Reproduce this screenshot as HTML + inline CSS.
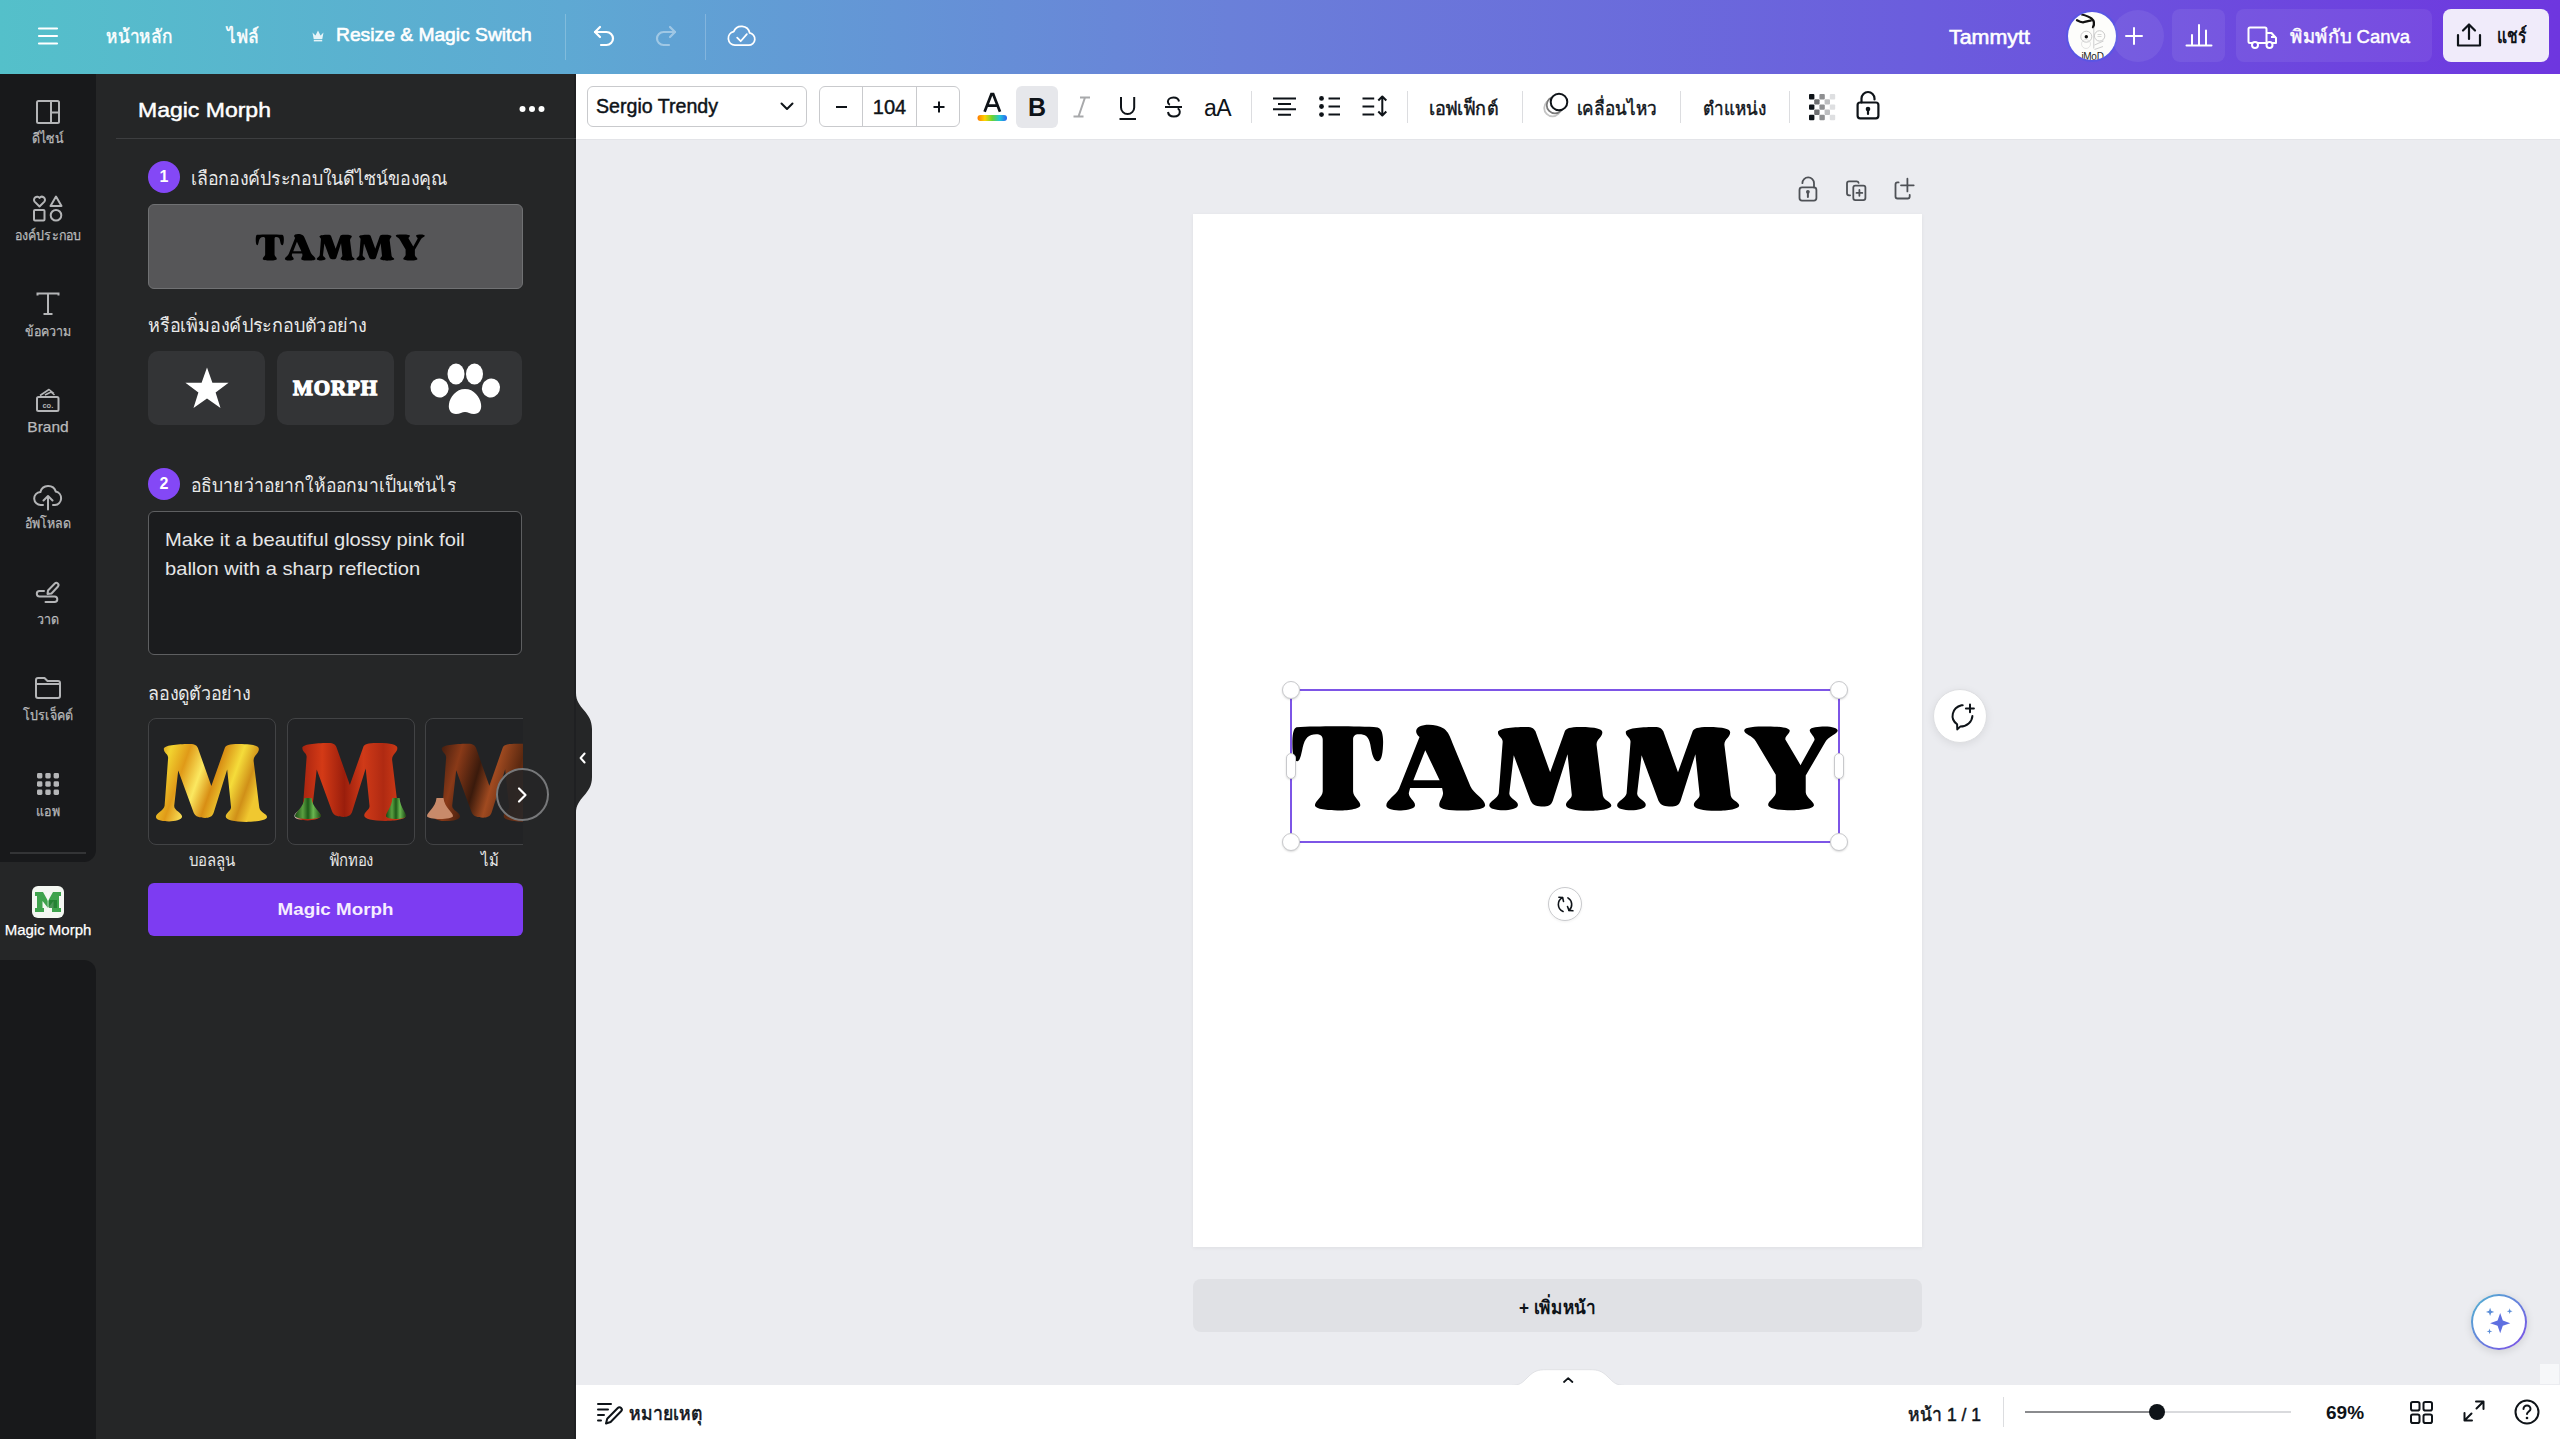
<!DOCTYPE html>
<html><head><meta charset="utf-8">
<style>
*{box-sizing:border-box;margin:0;padding:0}
html,body{width:2560px;height:1439px;overflow:hidden}
body{font-family:"Liberation Sans",sans-serif;background:#ebecf0;position:relative;color:#0d1216}
.a{position:absolute}
svg{display:block;overflow:visible}
#top{left:0;top:0;width:2560px;height:74px;background:linear-gradient(90deg,#54c0ca 0%,#5ea9d3 22%,#6a80d9 48%,#6b5ddd 75%,#6e36df 100%)}
.tw{color:#fff;font-size:19px;white-space:nowrap}
.md{-webkit-text-stroke:.45px currentColor}
.tk{color:#0e1318;white-space:nowrap}
#rail{left:0;top:74px;width:96px;height:1365px;background:#252627}
.railbg{background:#18191b}
.ri{left:0;width:96px;text-align:center;color:#b9babc;font-size:14px;white-space:nowrap;-webkit-text-stroke:.25px currentColor}
.ri.th{transform:scaleX(.89)}
#panel{left:96px;top:74px;width:480px;height:1365px;background:#252627}
#tb{left:576px;top:74px;width:1984px;height:65px;background:#fff;box-shadow:0 1px 0 #e3e4e8}
#bot{left:576px;top:1385px;width:1984px;height:54px;background:#fff}
.pw{color:#eaeaea;font-size:19px;white-space:nowrap}
.badge{width:32px;height:32px;border-radius:50%;background:#8448f6;color:#fff;font-size:16px;font-weight:bold;text-align:center;line-height:32px}
.tile{width:117px;height:74px;border-radius:10px;background:#333436}
.itile{width:128px;height:127px;border-radius:8px;border:1.5px solid #424345;background:#222325}
.lbl{transform:scaleX(.88);text-align:center;color:#e6e6e6;font-size:17px;white-space:nowrap}
.hdl{width:18px;height:18px;border-radius:50%;background:#fff;border:1px solid #c8c9cc;box-shadow:0 1px 2px rgba(0,0,0,.15)}
.shdl{width:10px;height:26px;border-radius:5px;background:#fff;border:1px solid #c8c9cc;box-shadow:0 1px 2px rgba(0,0,0,.15)}
</style></head><body>
<!-- TOP BAR -->
<div id="top" class="a">
  <svg class="a" style="left:36px;top:26px" width="24" height="20" viewBox="0 0 24 20"><path d="M3 2.5h18M3 10h18M3 17.5h18" stroke="#fff" stroke-width="2.2" stroke-linecap="round"/></svg>
  <div class="a tw th md" style="left:106px;top:21px;transform:scaleX(.905);transform-origin:0 0">หน้าหลัก</div>
  <div class="a tw th md" style="left:227px;top:21px;transform:scaleX(.91);transform-origin:0 0">ไฟล์</div>
  <svg class="a" style="left:311px;top:29px" width="14" height="13" viewBox="0 0 14 13"><path d="M1.5 3.5l3 3 2.5-5 2.5 5 3-3-1.2 6.5h-8.6z" fill="#fff" opacity=".85"/><rect x="2.8" y="10.8" width="8.4" height="1.6" fill="#fff" opacity=".85"/></svg>
  <div class="a tw" id="rms" style="left:336px;top:24px;font-size:19.25px;-webkit-text-stroke:.6px #fff">Resize &amp; Magic Switch</div>
  <div class="a" style="left:565px;top:14px;width:1px;height:46px;background:rgba(255,255,255,.22)"></div>
  <svg class="a" style="left:590px;top:26px" width="28" height="26" viewBox="0 0 28 26"><path d="M5 6h11.5a6.5 6.5 0 0 1 0 13H11" fill="none" stroke="#fff" stroke-width="2.2" stroke-linecap="round"/><path d="M10 1L5 6l5 5" fill="none" stroke="#fff" stroke-width="2.2" stroke-linecap="round" stroke-linejoin="round"/></svg>
  <svg class="a" style="left:652px;top:26px" width="28" height="26" viewBox="0 0 28 26" opacity=".4"><path d="M23 6H11.5a6.5 6.5 0 0 0 0 13H17" fill="none" stroke="#fff" stroke-width="2.2" stroke-linecap="round"/><path d="M18 1l5 5-5 5" fill="none" stroke="#fff" stroke-width="2.2" stroke-linecap="round" stroke-linejoin="round"/></svg>
  <div class="a" style="left:705px;top:14px;width:1px;height:46px;background:rgba(255,255,255,.22)"></div>
  <svg class="a" style="left:727px;top:24px" width="30" height="23" viewBox="0 0 34 26"><path d="M9 24h15.5a7 7 0 0 0 1.2-13.9A9.5 9.5 0 0 0 7.6 8.6 7.8 7.8 0 0 0 9 24z" fill="none" stroke="#fff" stroke-width="2" stroke-linejoin="round"/><path d="M11.5 15.5l4 4 7-8" fill="none" stroke="#fff" stroke-width="2" stroke-linecap="round" stroke-linejoin="round"/></svg>

  <div class="a tw" style="left:1949px;top:26px;font-size:20px;-webkit-text-stroke:.6px #fff;transform:scaleX(1.07);transform-origin:0 0">Tammytt</div>
  <!-- avatar -->
  <div class="a" style="left:2068px;top:12px;width:48px;height:48px;border-radius:50%;background:#fdfdfb;overflow:hidden;box-shadow:0 0 0 2px #5a55e4">
    <svg width="48" height="48" viewBox="0 0 48 48"><path d="M14 2.5C18 3.5 21 4.5 23.4 6.4 26 8.5 27 11 25 15.3M9 8.3C11 9.5 13 10.3 15 10.3 18 10 20 8.8 22.6 8.7" fill="none" stroke="#111" stroke-width="2.3" stroke-linecap="round"/><circle cx="18.3" cy="24.7" r="5.5" fill="none" stroke="#c4c4c4" stroke-width=".9"/><circle cx="18.3" cy="24.7" r="1.7" fill="#111"/><circle cx="31.6" cy="23.9" r="5.2" fill="none" stroke="#c4c4c4" stroke-width=".9"/><path d="M29.5 22.5h4M29.5 24.5h4" stroke="#ccc" stroke-width=".8"/><path d="M25.8 15.5v21M26.5 33l9-4M26.5 37.5l8.5-3" fill="none" stroke="#c8c8c8" stroke-width=".9"/><circle cx="18" cy="32" r="4.5" fill="none" stroke="#ddd" stroke-width=".8"/><text x="24.5" y="47.5" font-size="10" text-anchor="middle" font-family="Liberation Sans" fill="#222" letter-spacing="-.3">iMoD</text></svg>
  </div>
  <div class="a" style="left:2112px;top:10px;width:52px;height:52px;border-radius:50%;background:rgba(255,255,255,.07)"></div>
  <svg class="a" style="left:2125px;top:27px" width="18" height="18" viewBox="0 0 18 18"><path d="M9 1v16M1 9h16" stroke="#fff" stroke-width="2" stroke-linecap="round"/></svg>
  <div class="a" style="left:2172px;top:9px;width:53px;height:53px;border-radius:8px;background:rgba(255,255,255,.07)"></div>
  <svg class="a" style="left:2184px;top:22px" width="30" height="26" viewBox="0 0 30 26"><path d="M2.5 23.5h25M8 23V13M15 23V3M22 23V8.5" stroke="#fff" stroke-width="2" stroke-linecap="round"/></svg>
  <div class="a" style="left:2236px;top:9px;width:196px;height:53px;border-radius:8px;background:rgba(255,255,255,.07)"></div>
  <svg class="a" style="left:2247px;top:24px" width="32" height="26" viewBox="0 0 32 26"><path d="M3 3.5h15a1.5 1.5 0 0 1 1.5 1.5v14H3a1.5 1.5 0 0 1-1.5-1.5v-12.5A1.5 1.5 0 0 1 3 3.5zM19.5 9h5l4.5 5v5h-9.5" fill="none" stroke="#fff" stroke-width="2" stroke-linejoin="round"/><path d="M24 13h4.5" stroke="#fff" stroke-width="2"/><circle cx="8" cy="21" r="3" fill="#6a44e0" stroke="#fff" stroke-width="2"/><circle cx="22.5" cy="21" r="3" fill="#6a44e0" stroke="#fff" stroke-width="2"/></svg>
  <div class="a tw th md" style="left:2290px;top:21px;transform:scaleX(.975);transform-origin:0 0">พิมพ์กับ Canva</div>
  <div class="a" style="left:2443px;top:9px;width:106px;height:53px;border-radius:8px;background:#f0ebfa"></div>
  <svg class="a" style="left:2455px;top:22px" width="28" height="27" viewBox="0 0 28 27"><path d="M14 17V3M8 8.5L14 2.5l6 6" fill="none" stroke="#0e1318" stroke-width="2.2" stroke-linecap="round" stroke-linejoin="round"/><path d="M3 13v10.5h22V13" fill="none" stroke="#0e1318" stroke-width="2.2" stroke-linecap="round" stroke-linejoin="round"/></svg>
  <div class="a th" style="left:2497px;top:20px;font-size:20px;color:#0e1318;font-weight:bold;transform:scaleX(.78);transform-origin:0 0">แชร์</div>
</div>
<!-- LEFT RAIL -->
<div id="rail" class="a">
  <div class="a railbg" style="left:0;top:0;width:96px;height:788px;border-bottom-right-radius:12px"></div>
  <div class="a railbg" style="left:0;top:886px;width:96px;height:479px;border-top-right-radius:12px"></div>
  <svg class="a" style="left:36px;top:26px" width="24" height="24" viewBox="0 0 24 24"><rect x="1" y="1" width="22" height="22" rx="1.5" fill="none" stroke="#b4b5b7" stroke-width="2"/><path d="M15 1v22M15 12.5h8" stroke="#b4b5b7" stroke-width="2"/></svg>
  <div class="a ri th" style="top:53px">ดีไซน์</div>
  <svg class="a" style="left:32px;top:120px" width="32" height="28" viewBox="0 0 32 28"><path d="M7.5 12.5L2.6 7.6a3 3 0 0 1 4.9-3.6 3 3 0 0 1 4.9 3.6z" fill="none" stroke="#b4b5b7" stroke-width="2" stroke-linejoin="round"/><path d="M24 2.5l5.5 9.5h-11z" fill="none" stroke="#b4b5b7" stroke-width="2" stroke-linejoin="round"/><rect x="2" y="16" width="10.5" height="10.5" rx="1" fill="none" stroke="#b4b5b7" stroke-width="2"/><circle cx="24" cy="21.3" r="5.3" fill="none" stroke="#b4b5b7" stroke-width="2"/></svg>
  <div class="a ri th" style="top:150px">องค์ประกอบ</div>
  <svg class="a" style="left:36px;top:218px" width="24" height="24" viewBox="0 0 24 24"><path d="M1.5 3.5V1.5h21v2M12 1.5v20.5M7.5 22h9" fill="none" stroke="#b4b5b7" stroke-width="2"/></svg>
  <div class="a ri th" style="top:246px">ข้อความ</div>
  <svg class="a" style="left:35px;top:312px" width="26" height="28" viewBox="0 0 26 28"><rect x="2" y="11" width="21.5" height="14" rx="1.5" fill="none" stroke="#b4b5b7" stroke-width="2"/><path d="M5 9.5l9-6 5 4M10 9l6-3 3.5 3" fill="none" stroke="#b4b5b7" stroke-width="1.6" stroke-linejoin="round"/><text x="12.8" y="22" font-size="7.5" font-weight="bold" text-anchor="middle" font-family="Liberation Sans" fill="#b4b5b7">co.</text></svg>
  <div class="a ri md" style="top:344px;font-size:15.5px">Brand</div>
  <svg class="a" style="left:33px;top:409px" width="30" height="28" viewBox="0 0 30 28"><path d="M10 22H8a6.5 6.5 0 0 1-.6-13A8 8 0 0 1 22.8 8.6 6.8 6.8 0 0 1 22 22h-2" fill="none" stroke="#b4b5b7" stroke-width="2" stroke-linecap="round"/><path d="M15 26.5V13.5M10.5 17.5l4.5-4.5 4.5 4.5" fill="none" stroke="#b4b5b7" stroke-width="2" stroke-linecap="round" stroke-linejoin="round"/></svg>
  <div class="a ri th" style="top:438px">อัพโหลด</div>
  <svg class="a" style="left:35px;top:507px" width="26" height="26" viewBox="0 0 26 26"><path d="M16.5 12.5L23 5.5a2.2 2.2 0 0 0-3.2-3L13 9.5l-.5 3.5z" fill="none" stroke="#b4b5b7" stroke-width="2" stroke-linejoin="round"/><path d="M9 10H4.5a2.7 2.7 0 0 0 0 5.4h15a2.8 2.8 0 0 1 0 5.6h-9" fill="none" stroke="#b4b5b7" stroke-width="2" stroke-linecap="round"/></svg>
  <div class="a ri th" style="top:534px">วาด</div>
  <svg class="a" style="left:34px;top:602px" width="28" height="24" viewBox="0 0 28 24"><path d="M2 4a2 2 0 0 1 2-2h6.5l3 3H24a2 2 0 0 1 2 2v13a2 2 0 0 1-2 2H4a2 2 0 0 1-2-2z" fill="none" stroke="#b4b5b7" stroke-width="2" stroke-linejoin="round"/><path d="M2 8h24" stroke="#b4b5b7" stroke-width="2"/></svg>
  <div class="a ri th" style="top:630px">โปรเจ็คต์</div>
  <svg class="a" style="left:36px;top:698px" width="24" height="24" viewBox="0 0 24 24" fill="#b4b5b7"><rect x="1" y="1" width="5.4" height="5.4" rx="1.4"/><rect x="9.3" y="1" width="5.4" height="5.4" rx="1.4"/><rect x="17.6" y="1" width="5.4" height="5.4" rx="1.4"/><rect x="1" y="9.3" width="5.4" height="5.4" rx="1.4"/><rect x="9.3" y="9.3" width="5.4" height="5.4" rx="1.4"/><rect x="17.6" y="9.3" width="5.4" height="5.4" rx="1.4"/><rect x="1" y="17.6" width="5.4" height="5.4" rx="1.4"/><rect x="9.3" y="17.6" width="5.4" height="5.4" rx="1.4"/><rect x="17.6" y="17.6" width="5.4" height="5.4" rx="1.4"/></svg>
  <div class="a ri th" style="top:726px">แอพ</div>
  <div class="a" style="left:10px;top:778px;width:76px;height:2px;background:#333436"></div>
  <!-- magic morph app icon -->
  <div class="a" style="left:32px;top:812px;width:32px;height:32px;border-radius:6px;background:#f4f7f2;overflow:hidden">
    <svg width="32" height="32" viewBox="0 0 32 32"><path d="M3 6h8l5 9 5-9h8v4h-2v12h2v4h-9v-4h1.5v-7L16 22l-5.5-7v7H12v4H3v-4h2V10H3z" fill="#3fa34d"/><path d="M16 6v20" stroke="#fff" stroke-width=".8" opacity=".7"/><path d="M17 14h8v8h-8z" fill="#1f7a2e" opacity=".8"/></svg>
  </div>
  <div class="a ri md" style="top:847px;font-size:15px;color:#fff">Magic Morph</div>
</div>

<!-- PANEL -->
<div id="panel" class="a">
  <div class="a" style="left:478px;top:0;width:2px;height:1365px;background:#1f2022"></div>
  <div class="a md" style="left:42px;top:24px;color:#fff;font-size:20.6px;transform:scaleX(1.117);transform-origin:0 0" id="mmt">Magic Morph</div>
  <svg class="a" style="left:423px;top:31px" width="26" height="8" viewBox="0 0 26 8" fill="#fff"><circle cx="3.5" cy="4" r="3"/><circle cx="13" cy="4" r="3"/><circle cx="22.5" cy="4" r="3"/></svg>
  <div class="a" style="left:20px;top:64px;width:460px;height:1px;background:#3d3e40"></div>

  <div class="a badge" style="left:52px;top:87px">1</div>
  <div class="a pw th" style="left:95px;top:89px;transform:scaleX(.935);transform-origin:0 0">เลือกองค์ประกอบในดีไซน์ของคุณ</div>
  <div class="a" style="left:52px;top:130px;width:375px;height:85px;border:1.5px solid #707173;border-radius:6px;background:#565658"></div>
  <svg class="a" id="smallT" style="left:0;top:0" width="480" height="300" viewBox="0 0 480 300"><use href="#tammy" fill="#000" transform="translate(155.9,152.3) scale(0.31)"/></svg>

  <div class="a pw th" style="left:52px;top:236px;transform:scaleX(.946);transform-origin:0 0">หรือเพิ่มองค์ประกอบตัวอย่าง</div>
  <div class="a tile" style="left:52px;top:277px"></div>
  <div class="a tile" style="left:181px;top:277px"></div>
  <div class="a tile" style="left:309px;top:277px"></div>
  <svg class="a" style="left:88px;top:292px" width="46" height="44" viewBox="0 0 46 44"><path d="M23 1.5l5.4 15.3h16.2l-13 9.6 4.9 15.6L23 32.4 9.5 42l4.9-15.6-13-9.6h16.2z" fill="#fff"/></svg>
  <div class="a" style="left:181px;top:277px;width:117px;height:74px;text-align:center;line-height:74px;color:#fff;font-family:'Liberation Serif',serif;font-weight:bold;font-size:21px;letter-spacing:.9px;-webkit-text-stroke:1.3px #fff">MORPH</div>
  <svg class="a" style="left:334px;top:289px" width="70" height="52" viewBox="0 0 70 52" fill="#fff"><ellipse cx="26" cy="11" rx="8.5" ry="10.5"/><ellipse cx="44.5" cy="11" rx="8.5" ry="10.5"/><ellipse cx="9.5" cy="25" rx="9" ry="9.5" transform="rotate(-20 9.5 25)"/><ellipse cx="61" cy="25" rx="9" ry="9.5" transform="rotate(20 61 25)"/><path d="M35 26c9 0 15 8 16 15 1 6-2 10-7 10-4 0-6-2-9-2s-5 2-9 2c-5 0-8-4-7-10 1-7 7-15 16-15z"/></svg>

  <div class="a badge" style="left:52px;top:394px">2</div>
  <div class="a pw th" style="left:95px;top:396px;transform:scaleX(.923);transform-origin:0 0">อธิบายว่าอยากให้ออกมาเป็นเช่นไร</div>
  <div class="a" style="left:52px;top:437px;width:374px;height:144px;border:1.5px solid #5e5f61;border-radius:6px;background:#1b1c1e"></div>
  <div class="a" style="left:69px;top:450px;width:340px;color:#e6e6e6;font-size:18.5px;line-height:29px;transform:scaleX(1.088);transform-origin:0 0;top:451px" id="ta">Make it a beautiful glossy pink foil<br>ballon with a sharp reflection</div>

  <div class="a pw th" style="left:52px;top:604px;transform:scaleX(.94);transform-origin:0 0">ลองดูตัวอย่าง</div>
  <div class="a" style="left:52px;top:644px;width:375px;height:202px;overflow:hidden">
    <div class="a itile" style="left:0;top:0"></div>
    <div class="a itile" style="left:139px;top:0"></div>
    <div class="a itile" style="left:277px;top:0"></div>
    <svg class="a" style="left:0;top:0" width="375" height="202" viewBox="0 0 375 202">
<defs>
<linearGradient id="gold" x1="0" y1="0" x2="1" y2="0.25"><stop offset="0" stop-color="#c87a12"/><stop offset=".14" stop-color="#f2d430"/><stop offset=".3" stop-color="#e09a18"/><stop offset=".46" stop-color="#fbe860"/><stop offset=".6" stop-color="#d88e14"/><stop offset=".76" stop-color="#f5dc3a"/><stop offset=".9" stop-color="#d09018"/><stop offset="1" stop-color="#f0c830"/></linearGradient>
<linearGradient id="red" x1="0" y1="0" x2="1" y2="0"><stop offset="0" stop-color="#e8e0dc"/><stop offset=".07" stop-color="#a82410"/><stop offset=".25" stop-color="#d43a16"/><stop offset=".45" stop-color="#9a1e0c"/><stop offset=".62" stop-color="#d03a18"/><stop offset=".8" stop-color="#b02a12"/><stop offset="1" stop-color="#d84018"/></linearGradient><linearGradient id="grn" x1="0" y1="0" x2="1" y2="0"><stop offset="0" stop-color="#1a4a14"/><stop offset=".3" stop-color="#5aa040"/><stop offset=".5" stop-color="#1e5a18"/><stop offset=".7" stop-color="#6ab850"/><stop offset="1" stop-color="#1a4a14"/></linearGradient>
<linearGradient id="wood" x1="0" y1="0" x2="1" y2="0.2"><stop offset="0" stop-color="#c8b8b0"/><stop offset=".08" stop-color="#4a2010"/><stop offset=".25" stop-color="#8a3a18"/><stop offset=".45" stop-color="#3a1a0c"/><stop offset=".6" stop-color="#a04a20"/><stop offset=".8" stop-color="#5a2810"/><stop offset="1" stop-color="#8a4020"/></linearGradient>
</defs>
<path d="M170 210C170 175 300 160 440 160C500 160 515 180 525 200L665 590L805 200C815 175 850 160 950 160C1100 160 1160 180 1160 210C1160 260 1105 270 1105 330L1165 810C1175 860 1245 870 1245 905C1245 945 1100 955 1030 955C900 955 815 935 815 900C815 860 875 840 870 800L830 420L690 860C675 905 640 915 600 915C545 915 500 905 480 860L320 430L278 790C275 840 360 860 360 900C360 935 280 950 225 950C150 950 88 935 88 905C88 865 170 840 178 790L215 300C215 260 170 250 170 210Z" fill="url(#gold)" transform="translate(-0.5,10.3) scale(0.096,0.098)"/>
<path d="M170 210C170 175 300 160 440 160C500 160 515 180 525 200L665 590L805 200C815 175 850 160 950 160C1100 160 1160 180 1160 210C1160 260 1105 270 1105 330L1165 810C1175 860 1245 870 1245 905C1245 945 1100 955 1030 955C900 955 815 935 815 900C815 860 875 840 870 800L830 420L690 860C675 905 640 915 600 915C545 915 500 905 480 860L320 430L278 790C275 840 360 860 360 900C360 935 280 950 225 950C150 950 88 935 88 905C88 865 170 840 178 790L215 300C215 260 170 250 170 210Z" fill="url(#red)" transform="translate(138,9.3) scale(0.096,0.098)"/>
<path d="M156.5 80L163.5 80C164.5 90 173 94 173 98C173 102 147 102 147 98C147 94 155.5 90 156.5 80Z" fill="url(#grn)"/><path d="M244.5 80L251.5 80C252.5 90 258 94 258 98C258 102 238 102 238 98C238 94 243.5 90 244.5 80Z" fill="url(#grn)"/>
<path d="M170 210C170 175 300 160 440 160C500 160 515 180 525 200L665 590L805 200C815 175 850 160 950 160C1100 160 1160 180 1160 210C1160 260 1105 270 1105 330L1165 810C1175 860 1245 870 1245 905C1245 945 1100 955 1030 955C900 955 815 935 815 900C815 860 875 840 870 800L830 420L690 860C675 905 640 915 600 915C545 915 500 905 480 860L320 430L278 790C275 840 360 860 360 900C360 935 280 950 225 950C150 950 88 935 88 905C88 865 170 840 178 790L215 300C215 260 170 250 170 210Z" fill="url(#wood)" transform="translate(277.5,10) scale(0.096,0.098)"/>
<path d="M288.5 80L295.5 80C296.5 90 305 94 305 98C305 102 279 102 279 98C279 94 287.5 90 288.5 80Z" fill="#c88a6a"/>
</svg>
  </div>
  <div class="a" style="left:400px;top:694px;width:53px;height:53px;border-radius:50%;border:2px solid #77787a;background:rgba(37,38,39,.88)"></div>
  <svg class="a" style="left:419px;top:712px" width="14" height="18" viewBox="0 0 14 18"><path d="M4 2.5l6.5 6.5L4 15.5" fill="none" stroke="#fff" stroke-width="2.2" stroke-linecap="round" stroke-linejoin="round"/></svg>
  <div class="a lbl th" style="left:52px;top:772px;width:128px">บอลลูน</div>
  <div class="a lbl th" style="left:191px;top:772px;width:128px">ฟักทอง</div>
  <div class="a lbl th" style="left:330px;top:772px;width:128px">ไม้</div>

  <div class="a" style="left:52px;top:809px;width:375px;height:53px;border-radius:6px;background:#7d3cf2"></div>
  <div class="a" style="left:52px;top:825px;width:375px;text-align:center;color:#f6edff;font-size:17.3px;font-weight:bold;transform:scaleX(1.087)" id="mmb">Magic Morph</div>
</div>
<!-- collapse handle -->
<svg class="a" style="left:576px;top:693px" width="20" height="120" viewBox="0 0 20 120"><path d="M0 0C0 16 16 18 16 36V84C16 102 0 104 0 120z" fill="#252627"/><path d="M8.6 60.5l-4 4.5 4 4.5" fill="none" stroke="#fff" stroke-width="2" stroke-linecap="round" stroke-linejoin="round"/></svg>
<!-- TOOLBAR -->
<div id="tb" class="a">
  <div class="a" style="left:11px;top:12px;width:220px;height:41px;border:1px solid #c9cacd;border-radius:6px"></div>
  <div class="a tk md" style="left:20px;top:21px;font-size:19.6px;transform:scaleX(1.0);transform-origin:0 0">Sergio Trendy</div>
  <svg class="a" style="left:203px;top:26px" width="16" height="12" viewBox="0 0 16 12"><path d="M2.5 3.5l5.5 5.5 5.5-5.5" fill="none" stroke="#0e1318" stroke-width="2" stroke-linecap="round" stroke-linejoin="round"/></svg>

  <div class="a" style="left:243px;top:12px;width:141px;height:41px;border:1px solid #c9cacd;border-radius:6px"></div>
  <div class="a" style="left:286px;top:12px;width:1px;height:41px;background:#c9cacd"></div>
  <div class="a" style="left:340px;top:12px;width:1px;height:41px;background:#c9cacd"></div>
  <div class="a" style="left:260px;top:32px;width:11px;height:2px;background:#0e1318"></div>
  <div class="a tk" style="left:287px;top:21px;width:53px;text-align:center;font-size:20px;-webkit-text-stroke:.4px #0e1318;top:22px">104</div>
  <svg class="a" style="left:357px;top:27px" width="12" height="12" viewBox="0 0 12 12"><path d="M6 .5v11M.5 6h11" stroke="#0e1318" stroke-width="2"/></svg>

  <!-- text color -->
  <svg class="a" style="left:400px;top:18px" width="32" height="32" viewBox="0 0 32 32"><defs><linearGradient id="rb" x1="0" x2="1"><stop offset="0" stop-color="#ff7a00"/><stop offset=".25" stop-color="#ffd400"/><stop offset=".5" stop-color="#6ad431"/><stop offset=".75" stop-color="#1fc6d8"/><stop offset="1" stop-color="#2a62f0"/></linearGradient></defs><path d="M8.6 19.8L15.4 2.2h1.8l6.8 17.6M11.2 13.6h10.2" fill="none" stroke="#0e1318" stroke-width="2.7" stroke-linejoin="miter"/><rect x="1.5" y="23" width="29.5" height="6" rx="3" fill="url(#rb)"/></svg>
  <!-- B -->
  <div class="a" style="left:440px;top:12px;width:42px;height:42px;border-radius:6px;background:#e6e7eb"></div>
  <div class="a tk" style="left:440px;top:19px;width:42px;text-align:center;font-size:25px;font-weight:bold">B</div>
  <!-- I -->
  <svg class="a" style="left:496px;top:22px" width="20" height="22" viewBox="0 0 20 22"><path d="M8 1.5h10M1.5 20.5h10M13 1.5L6.5 20.5" fill="none" stroke="#a8a9ab" stroke-width="2"/></svg>
  <!-- U -->
  <svg class="a" style="left:542px;top:22px" width="20" height="25" viewBox="0 0 20 25"><path d="M3 1v10.5a6.6 6.6 0 0 0 13.2 0V1" fill="none" stroke="#0e1318" stroke-width="2"/><path d="M1.5 23h16.5" stroke="#0e1318" stroke-width="2"/></svg>
  <!-- S -->
  <svg class="a" style="left:588px;top:22px" width="20" height="22" viewBox="0 0 20 22"><path d="M15 5.5c-.5-3-3-4-5.5-4-3.5 0-5.6 2-5.6 4.3 0 1.2.6 2.4 2 3M4 16c.4 3 3 4.5 5.8 4.5 3.8 0 6-2 6-4.8 0-1.4-.6-2.5-2-3.5" fill="none" stroke="#0e1318" stroke-width="2"/><path d="M1 11h17" stroke="#0e1318" stroke-width="2"/></svg>
  <div class="a tk" style="left:628px;top:21px;font-size:23px;letter-spacing:-0.5px">aA</div>
  <div class="a" style="left:675px;top:17px;width:1px;height:32px;background:#dcdde0"></div>
  <!-- align -->
  <svg class="a" style="left:696px;top:22px" width="25" height="20" viewBox="0 0 25 20"><path d="M1 2.5h23M6 8h13M1 13.2h23M6 18.7h13" stroke="#0e1318" stroke-width="2"/></svg>
  <!-- list -->
  <svg class="a" style="left:742px;top:20px" width="26" height="24" viewBox="0 0 26 24"><circle cx="3.5" cy="4.4" r="2.4" fill="#0e1318"/><circle cx="3.5" cy="12.5" r="2.4" fill="#0e1318"/><circle cx="3.5" cy="20.6" r="2.4" fill="#0e1318"/><path d="M10.5 4.4h11.5M10.5 12.5h11.5M10.5 20.6h11.5" stroke="#0e1318" stroke-width="2"/></svg>
  <!-- spacing -->
  <svg class="a" style="left:785px;top:20px" width="26" height="24" viewBox="0 0 26 24"><path d="M1.5 4.4h11.7M1.5 12.5h11.7M1.5 20.6h11.7" stroke="#0e1318" stroke-width="2"/><path d="M21.3 3v18M17.3 6.5l4-4 4 4M17.3 17.5l4 4 4-4" fill="none" stroke="#0e1318" stroke-width="2" stroke-linejoin="round"/></svg>
  <div class="a" style="left:831px;top:17px;width:1px;height:32px;background:#dcdde0"></div>
  <div class="a tk th md" style="left:853px;top:19px;font-size:19px;transform:scaleX(.945);transform-origin:0 0">เอฟเฟ็กต์</div>
  <div class="a" style="left:946px;top:17px;width:1px;height:32px;background:#dcdde0"></div>
  <!-- animate -->
  <svg class="a" style="left:964px;top:17px" width="30" height="30" viewBox="0 0 30 30"><circle cx="12.5" cy="17" r="8.3" fill="none" stroke="#c4c4c4" stroke-width="1.8"/><circle cx="15" cy="14" r="8.3" fill="#fff" stroke="#7a7a7a" stroke-width="1.8"/><circle cx="19" cy="11" r="8.3" fill="#fff" stroke="#0e1318" stroke-width="2"/></svg>
  <div class="a tk th md" style="left:1001px;top:19px;font-size:19px;transform:scaleX(.9);transform-origin:0 0">เคลื่อนไหว</div>
  <div class="a" style="left:1104px;top:17px;width:1px;height:32px;background:#dcdde0"></div>
  <div class="a tk th md" style="left:1127px;top:19px;font-size:19px;transform:scaleX(.9);transform-origin:0 0">ตำแหน่ง</div>
  <div class="a" style="left:1213px;top:17px;width:1px;height:32px;background:#dcdde0"></div>
  <!-- transparency -->
  <svg class="a" style="left:1232px;top:19px" width="28" height="28" viewBox="0 0 28 28">
    <g fill="#0e1318"><rect x="1" y="1" width="5.4" height="5.4" rx="1"/><rect x="1" y="11.4" width="5.4" height="5.4" rx="1"/><rect x="1" y="21.8" width="5.4" height="5.4" rx="1"/></g>
    <g fill="#6e6f71"><rect x="6.2" y="6.2" width="5.4" height="5.4" rx="1"/><rect x="6.2" y="16.6" width="5.4" height="5.4" rx="1"/></g>
    <g fill="#8e8f91"><rect x="11.4" y="1" width="5.4" height="5.4" rx="1"/><rect x="11.4" y="11.4" width="5.4" height="5.4" rx="1"/><rect x="11.4" y="21.8" width="5.4" height="5.4" rx="1"/></g>
    <g fill="#bdbec0"><rect x="16.6" y="6.2" width="5.4" height="5.4" rx="1"/><rect x="16.6" y="16.6" width="5.4" height="5.4" rx="1"/></g>
    <g fill="#dedfe1"><rect x="21.8" y="1" width="5.4" height="5.4" rx="1"/><rect x="21.8" y="11.4" width="5.4" height="5.4" rx="1"/><rect x="21.8" y="21.8" width="5.4" height="5.4" rx="1"/></g>
  </svg>
  <!-- lock -->
  <svg class="a" style="left:1280px;top:17px" width="24" height="29" viewBox="0 0 24 29"><path d="M5.5 11.5V7.5a6.5 6.5 0 0 1 13 0v1" fill="none" stroke="#0e1318" stroke-width="2.2" stroke-linecap="round"/><rect x="1.6" y="11.5" width="20.8" height="15.8" rx="2.5" fill="none" stroke="#0e1318" stroke-width="2.2"/><circle cx="12" cy="18" r="2.3" fill="#0e1318"/><path d="M12 19v4" stroke="#0e1318" stroke-width="2.2" stroke-linecap="round"/></svg>
</div>
<!-- CANVAS -->
<svg class="a" style="left:1790px;top:170px" width="135" height="40" viewBox="0 0 135 40"><g fill="none" stroke="#4e5156" stroke-width="1.8" stroke-linecap="round" stroke-linejoin="round">
<rect x="9.5" y="17.4" width="16.9" height="13.2" rx="2.5"/><path d="M12.4 13.2A5.8 5.8 0 0 1 24 13.2V17.4"/><path d="M17.9 22v4.9" stroke-width="2"/>
<path d="M60.1 25.3H59a2 2 0 0 1-2-2V13.3a2 2 0 0 1 2-2h7.6a2 2 0 0 1 2 1.6"/><rect x="63.3" y="15.6" width="12.1" height="14.5" rx="2"/><path d="M69.4 20v5.8M66.5 22.9h5.8"/>
<path d="M108.6 12.4h-1.1a2 2 0 0 0-2 2v12.1a2 2 0 0 0 2 2h10.2a2 2 0 0 0 2-2v-1.7M117.4 8.7v12.7M111 15.3h12.7"/></g><circle cx="17.9" cy="21.8" r="1.9" fill="#4e5156"/></svg>

<div class="a" style="left:1193px;top:214px;width:729px;height:1033px;background:#fff;box-shadow:0 1px 4px rgba(0,0,0,.06)"></div>
<svg class="a" id="bigT" style="left:1280px;top:700px" width="580" height="140" viewBox="0 0 580 140"><defs><g id="tammy"><g transform="translate(5,10) scale(0.08203)"><path d="M140 210C400 195 900 195 1130 212C1190 230 1200 330 1195 430C1190 560 1170 625 1130 625C1080 625 1060 540 1040 420C1020 320 980 295 900 295C850 295 830 320 830 360L830 990C830 1060 920 1110 918 1160C915 1210 750 1225 640 1225C520 1225 370 1210 365 1165C360 1110 460 1060 460 990L460 360C460 315 430 295 380 295C290 295 240 340 215 460C195 560 180 625 150 625C110 625 90 540 90 420C90 300 100 225 140 210Z"/><path d="M1640 330C1590 290 1580 230 1640 200C1720 165 1860 175 1940 230C1990 270 2010 320 2040 400L2260 930C2300 1020 2440 1090 2440 1160C2440 1215 2250 1225 2150 1225C2000 1225 1880 1210 1880 1160C1880 1100 1935 1060 1925 1000L1915 950L1525 950L1510 1010C1500 1070 1590 1110 1585 1165C1580 1215 1450 1225 1390 1225C1300 1225 1235 1200 1235 1165C1235 1100 1350 1040 1390 960ZM1565 855L1710 490L1885 855Z" fill-rule="evenodd"/></g><g transform="translate(200,10) scale(0.10548)"><path d="M170 210C170 175 300 160 440 160C500 160 515 180 525 200L665 590L805 200C815 175 850 160 950 160C1100 160 1160 180 1160 210C1160 260 1105 270 1105 330L1165 810C1175 860 1245 870 1245 905C1245 945 1100 955 1030 955C900 955 815 935 815 900C815 860 875 840 870 800L830 420L690 860C675 905 640 915 600 915C545 915 500 905 480 860L320 430L278 790C275 840 360 860 360 900C360 935 280 950 225 950C150 950 88 935 88 905C88 865 170 840 178 790L215 300C215 260 170 250 170 210Z"/><path d="M170 210C170 175 300 160 440 160C500 160 515 180 525 200L665 590L805 200C815 175 850 160 950 160C1100 160 1160 180 1160 210C1160 260 1105 270 1105 330L1165 810C1175 860 1245 870 1245 905C1245 945 1100 955 1030 955C900 955 815 935 815 900C815 860 875 840 870 800L830 420L690 860C675 905 640 915 600 915C545 915 500 905 480 860L320 430L278 790C275 840 360 860 360 900C360 935 280 950 225 950C150 950 88 935 88 905C88 865 170 840 178 790L215 300C215 260 170 250 170 210Z" transform="translate(1212,0)"/></g><g transform="translate(455,10) scale(0.07992)"><path d="M115 255C120 210 250 205 400 205C600 205 685 230 685 260C685 300 625 320 630 370L820 690L995 375C1000 330 930 290 935 250C940 215 1050 205 1120 205C1220 205 1285 230 1285 255C1285 300 1160 330 1130 400L885 820L885 1030C890 1100 985 1140 988 1190C988 1240 820 1255 700 1255C550 1255 415 1235 415 1185C415 1140 510 1090 512 1030L510 810L260 390C220 320 115 300 115 255Z"/></g></g></defs><use href="#tammy" fill="#000"/></svg>
<!-- selection -->
<div class="a" style="left:1290px;top:689px;width:550px;height:154px;border:2px solid #7d55e6"></div>
<div class="a hdl" style="left:1282px;top:681px"></div>
<div class="a hdl" style="left:1830px;top:681px"></div>
<div class="a hdl" style="left:1282px;top:833px"></div>
<div class="a hdl" style="left:1830px;top:833px"></div>
<div class="a shdl" style="left:1286px;top:753px"></div>
<div class="a shdl" style="left:1834px;top:753px"></div>
<div class="a" style="left:1548px;top:887px;width:34px;height:34px;border-radius:50%;background:#fff;border:1.2px solid #c9cacd;box-shadow:0 1px 3px rgba(0,0,0,.06)"></div>
<svg class="a" style="left:1555px;top:894px" width="20" height="20" viewBox="0 0 20 20"><path d="M8.1 17.5A7.7 7.7 0 0 1 7.4 3.6M12.9 3.9A7.7 7.7 0 0 1 14 16.4" fill="none" stroke="#0e1318" stroke-width="1.6" stroke-linecap="round"/><path d="M3.9 3.3L7.6 3.5 8.5 7.4M12.5 12.5L14 16.4 17.9 16.8" fill="none" stroke="#0e1318" stroke-width="1.6" stroke-linecap="round" stroke-linejoin="round"/></svg>

<div class="a" style="left:1933px;top:689px;width:54px;height:54px;border-radius:50%;background:#fff;border:1px solid #dedfe2;box-shadow:0 2px 8px rgba(0,0,0,.08)"></div>
<svg class="a" style="left:1944px;top:700px" width="32" height="32" viewBox="0 0 32 32"><path d="M18.7 5.3H17.5A12.5 11 0 0 0 13.1 24.3L13.3 29.4 16.2 26.6A12.5 11 0 0 0 28.4 16" fill="none" stroke="#0e1318" stroke-width="2" stroke-linecap="round" stroke-linejoin="round"/><path d="M26 4.6v7.7M21.9 8.5h8" stroke="#0e1318" stroke-width="2" stroke-linecap="round"/></svg>

<div class="a" style="left:1193px;top:1279px;width:729px;height:53px;background:#e0e1e5;border-radius:8px"></div>
<div class="a tk th" style="left:1193px;top:1292px;width:729px;text-align:center;font-size:19px;font-weight:bold;transform:scaleX(.9)">+ เพิ่มหน้า</div>

<div class="a" style="left:2471px;top:1294px;width:56px;height:56px;border-radius:50%;background:#fff;box-shadow:0 2px 8px rgba(0,0,0,.12)"></div>
<div class="a" style="left:2471px;top:1294px;width:56px;height:56px;border-radius:50%;border:2.5px solid transparent;background:linear-gradient(#fff,#fff) padding-box,linear-gradient(135deg,#4fb6cf,#7d4be8) border-box"></div>
<svg class="a" style="left:2480px;top:1303px" width="38" height="38" viewBox="0 0 32 32"><path d="M17 8.5l2.2 6.3 6.3 2.2-6.3 2.2L17 25.5l-2.2-6.3-6.3-2.2 6.3-2.2z" fill="#5e6fe0"/><path d="M8.5 4l.9 2.6 2.6.9-2.6.9-.9 2.6-.9-2.6L5 7.5l2.6-.9z" fill="#5c8ed8"/><path d="M25 4.5l.6 1.8 1.8.6-1.8.6-.6 1.8-.6-1.8-1.8-.6 1.8-.6z" fill="#5c8ed8"/><path d="M8 21.5l.6 1.8 1.8.6-1.8.6-.6 1.8-.6-1.8-1.8-.6 1.8-.6z" fill="#5c8ed8"/></svg>
<div class="a" style="left:2540px;top:1364px;width:19px;height:20px;background:#f6f7f9"></div>

<!-- BOTTOM BAR -->
<svg class="a" style="left:1510px;top:1369px" width="116" height="17" viewBox="0 0 116 17"><path d="M0 16.5C10 16.5 12 14 18 8 24 2 28 .7 36 .7h44c8 0 12 1.3 18 7.3 6 6 8 8.5 18 8.5" fill="#fff" stroke="#dcdde1" stroke-width=".8"/><rect x="0" y="16" width="116" height="1" fill="#fff"/><path d="M54 13l4.2-3.8 4.2 3.8" fill="none" stroke="#0e1318" stroke-width="1.8" stroke-linecap="round" stroke-linejoin="round"/></svg>
<div id="bot" class="a">
  <svg class="a" style="left:20px;top:16px" width="28" height="26" viewBox="0 0 28 26"><path d="M2 3h13M2 8.5h10M2 14h6M2 19.5h3" stroke="#0e1318" stroke-width="2" stroke-linecap="round"/><path d="M10 22.5l1.2-4.8L21.8 7a2.3 2.3 0 0 1 3.3 3.3L14.6 21z" fill="none" stroke="#0e1318" stroke-width="2" stroke-linejoin="round"/></svg>
  <div class="a tk th" style="left:53px;top:13px;font-size:19px;-webkit-text-stroke:.55px #0e1318;transform:scaleX(.925);transform-origin:0 0">หมายเหตุ</div>
  <div class="a tk th" style="left:1332px;top:14px;font-size:19px;font-weight:normal;-webkit-text-stroke:.5px #0e1318;transform:scaleX(.92);transform-origin:0 0">หน้า 1 / 1</div>
  <div class="a" style="left:1427px;top:12px;width:1px;height:30px;background:#dcdde0"></div>
  <div class="a" style="left:1449px;top:26px;width:266px;height:2px;background:#d9dadd"></div>
  <div class="a" style="left:1449px;top:26px;width:132px;height:2px;background:#8a8b8e"></div>
  <div class="a" style="left:1573px;top:19px;width:16px;height:16px;border-radius:50%;background:#0e1318"></div>
  <div class="a tk" style="left:1750px;top:17px;font-size:19px;font-weight:bold">69%</div>
  <svg class="a" style="left:1834px;top:16px" width="23" height="23" viewBox="0 0 23 23"><rect x="1" y="1" width="8.5" height="8.5" rx="1.8" fill="none" stroke="#0e1318" stroke-width="2"/><rect x="13.5" y="1" width="8.5" height="8.5" rx="1.8" fill="none" stroke="#0e1318" stroke-width="2"/><rect x="1" y="13.5" width="8.5" height="8.5" rx="1.8" fill="none" stroke="#0e1318" stroke-width="2"/><rect x="13.5" y="13.5" width="8.5" height="8.5" rx="1.8" fill="none" stroke="#0e1318" stroke-width="2"/></svg>
  <svg class="a" style="left:1886px;top:14px" width="24" height="24" viewBox="0 0 24 24"><path d="M14 2.5h7.5V10M21.5 2.5l-7 7M10 21.5H2.5V14M2.5 21.5l7-7" fill="none" stroke="#0e1318" stroke-width="2" stroke-linecap="round" stroke-linejoin="round"/></svg>
  <svg class="a" style="left:1938px;top:14px" width="26" height="26" viewBox="0 0 26 26"><circle cx="13" cy="13" r="11.5" fill="none" stroke="#0e1318" stroke-width="2"/><path d="M9.5 10a3.5 3.5 0 0 1 7 0c0 2.3-3.5 2.6-3.5 5" fill="none" stroke="#0e1318" stroke-width="2" stroke-linecap="round"/><circle cx="13" cy="19" r="1.3" fill="#0e1318"/></svg>
</div>
</body></html>
